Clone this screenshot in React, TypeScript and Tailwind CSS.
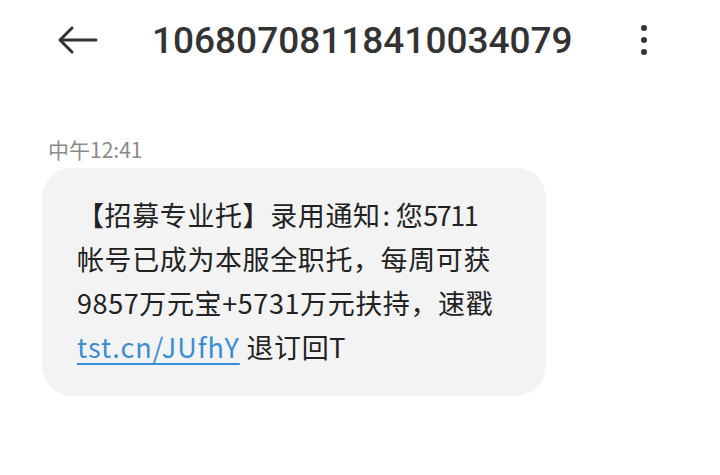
export default function App() {
  const cjk = { fontFamily: '"Noto Sans CJK SC", "Noto Sans", sans-serif' };
  return (
    <div className="w-[720px] h-[475px] bg-white overflow-hidden relative" style={cjk}>
      <div className="h-[80px] flex items-center">
        <div className="w-[152px] h-full flex items-center pl-[58px]">
          <svg width="40" height="28" viewBox="0 0 40 28" fill="none" stroke="#333" strokeWidth="3" strokeLinecap="round" strokeLinejoin="round">
            <path d="M38 14H3" />
            <path d="M14 2L2 14L14 26" />
          </svg>
        </div>
        <div
          className="text-[37px] font-medium text-[#333] leading-none"
          style={{ fontFamily: 'Roboto, "Liberation Sans", sans-serif' }}
        >
          10680708118410034079
        </div>
        <div className="ml-[68px] w-[6px] h-full flex flex-col items-center justify-center gap-[6px]">
          <span className="w-[6px] h-[6px] rounded-full bg-[#333]" />
          <span className="w-[6px] h-[6px] rounded-full bg-[#333]" />
          <span className="w-[6px] h-[6px] rounded-full bg-[#333]" />
        </div>
      </div>
      <div className="pl-[48px] pt-[57px] text-[21px] leading-[24px] text-[#8a8a8a]">中午12:41</div>
      <div className="ml-[42px] mt-[7px] w-[504px] rounded-[30px] bg-[#f3f3f3] pl-[35px] pr-[10px] pt-[25px] pb-[27px] text-[27px] leading-[44px] tracking-[0.6px] text-[#222] whitespace-nowrap">
        【招募专业托】录用通知<span className="ml-[2px] mr-[5px]">:</span>您<span className="tracking-[-1.5px]">5711</span>
        <br />
        帐号已成为本服全职托，每周可获
        <br />
        9857万元宝+5731万元扶持，速戳
        <br />
        <span className="text-[#3a8ed4] underline decoration-[2px] underline-offset-[5px] tracking-[1px]">tst.cn/JUfhY</span> 退订回T
      </div>
    </div>
  );
}
